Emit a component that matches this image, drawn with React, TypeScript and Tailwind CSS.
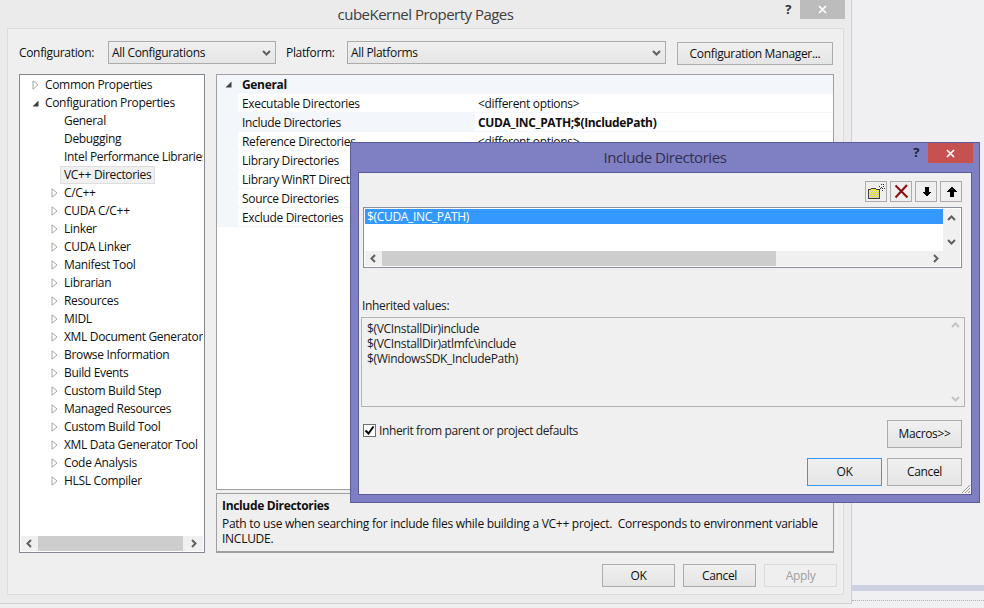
import React from "react";

const font = { fontFamily: '"Open Sans", "Noto Sans", sans-serif' };

const Chev = ({ dir, className = "" }: { dir: "l" | "r" | "u" | "d"; className?: string }) => {
  const d = { l: "M6 1 L2.5 4.5 L6 8", r: "M3 1 L6.5 4.5 L3 8", u: "M1 6 L4.5 2.5 L8 6", d: "M1 3 L4.5 6.5 L8 3" }[dir];
  return (
    <svg width="9" height="9" viewBox="0 0 9 9" className={className}>
      <path d={d} fill="none" stroke="#606060" strokeWidth="2" />
    </svg>
  );
};

const Tri = ({ open }: { open?: boolean }) =>
  open ? (
    <svg width="7" height="7" viewBox="0 0 7 7"><path d="M6.5 0.5 V6.5 H0.5 Z" fill="#404040" /></svg>
  ) : (
    <svg width="7" height="10" viewBox="0 0 7 10"><path d="M1 0.8 L6 5 L1 9.2 Z" fill="#fff" stroke="#a6a6a6" /></svg>
  );

const Btn = ({ children, className = "", disabled }: { children: React.ReactNode; className?: string; disabled?: boolean }) => (
  <div className={`flex items-center justify-center border text-xs ${disabled ? "border-[#d9d9d9] text-[#a0a0a0] bg-[#efefef]" : "border-[#acacac] text-[#101010] bg-gradient-to-b from-[#f0f0f0] to-[#e5e5e5]"} ${className}`}>
    {children}
  </div>
);

const Combo = ({ text, className = "" }: { text: string; className?: string }) => (
  <div className={`flex h-[23px] items-center justify-between border border-[#acacac] bg-gradient-to-b from-[#f0f0f0] to-[#e5e5e5] pl-[3px] pr-[4px] text-xs text-[#101010] ${className}`}>
    <span className="pt-[2px]">{text}</span>
    <Chev dir="d" />
  </div>
);

const tree: [string, number][] = [
  ["Common Properties", 0],
  ["Configuration Properties", 1],
  ["General", 2],
  ["Debugging", 2],
  ["Intel Performance Libraries", 2],
  ["VC++ Directories", 3],
  ["C/C++", 4],
  ["CUDA C/C++", 4],
  ["Linker", 4],
  ["CUDA Linker", 4],
  ["Manifest Tool", 4],
  ["Librarian", 4],
  ["Resources", 4],
  ["MIDL", 4],
  ["XML Document Generator", 4],
  ["Browse Information", 4],
  ["Build Events", 4],
  ["Custom Build Step", 4],
  ["Managed Resources", 4],
  ["Custom Build Tool", 4],
  ["XML Data Generator Tool", 4],
  ["Code Analysis", 4],
  ["HLSL Compiler", 4],
];

const TreeRow = ({ label, kind }: { label: string; kind: number }) => {
  if (kind <= 1) {
    return (
      <div className="flex h-[18px] items-center whitespace-nowrap">
        <div className="flex w-[24px] items-center pl-[11px]"><Tri open={kind === 1} /></div>
        <span>{label}</span>
      </div>
    );
  }
  return (
    <div className="flex h-[18px] items-center whitespace-nowrap">
      <div className="flex w-[43px] shrink-0 items-center pl-[30px]">{kind === 4 && <Tri />}</div>
      {kind === 3 ? (
        <span className="-ml-[4px] border border-[#dedede] bg-[#f0f0f0] px-[3px] leading-[16px]">{label}</span>
      ) : (
        <span>{label}</span>
      )}
    </div>
  );
};

const props: [string, string, boolean?][] = [
  ["Executable Directories", "<different options>"],
  ["Include Directories", "CUDA_INC_PATH;$(IncludePath)", true],
  ["Reference Directories", "<different options>"],
  ["Library Directories", ""],
  ["Library WinRT Directories", ""],
  ["Source Directories", ""],
  ["Exclude Directories", ""],
];

const NewFolder = () => (
  <svg width="18" height="16" viewBox="0 0 18 16" shapeRendering="crispEdges">
    <path d="M1.5 5.5 H3.5 L4.5 4.5 H8.5 L9.5 5.5 H12.5 V14.5 H1.5 Z" fill="#f2ee3c" stroke="#404040" />
    <path d="M3 7h1v1H3zM5 7h1v1H5zM7 7h1v1H7zM9 7h1v1H9zM11 7h1v1h-1zM4 8h1v1H4zM6 8h1v1H6zM8 8h1v1H8zM10 8h1v1h-1zM3 9h1v1H3zM5 9h1v1H5zM7 9h1v1H7zM9 9h1v1H9zM11 9h1v1h-1zM4 10h1v1H4zM6 10h1v1H6zM8 10h1v1H8zM10 10h1v1h-1zM3 11h1v1H3zM5 11h1v1H5zM7 11h1v1H7zM9 11h1v1H9zM11 11h1v1h-1zM4 12h1v1H4zM6 12h1v1H6zM8 12h1v1H8zM10 12h1v1h-1zM3 13h1v1H3zM5 13h1v1H5zM7 13h1v1H7zM9 13h1v1H9zM11 13h1v1h-1z" fill="#c8c8b0" />
    <path d="M14 0h1v1h-1zM12 2h1v1h-1zM16 2h1v1h-1zM14 3h1v1h-1zM13 4h1v1h-1zM15 4h1v1h-1zM17 4h1v1h-1zM12 5h1v1h-1zM15 6h1v1h-1zM16 0h1v1h-1z" fill="#303030" />
  </svg>
);

const RedX = () => (
  <svg width="15" height="15" viewBox="0 0 15 15">
    <path d="M1.5 1.5 L13.5 13.5 M13 1 L1.5 13.5" stroke="#8a0f14" strokeWidth="2" fill="none" />
  </svg>
);

const ArrowIcon = ({ up }: { up?: boolean }) => (
  <svg width="11" height="11" viewBox="0 0 11 11" shapeRendering="crispEdges">
    <path d={up ? "M5.5 0.5 L10.5 5.5 H7.5 V10.5 H3.5 V5.5 H0.5 Z" : "M3.5 0.5 H7.5 V5.5 H10.5 L5.5 10.5 L0.5 5.5 H3.5 Z"} fill="#000" />
  </svg>
);

const ToolBtn = ({ children }: { children: React.ReactNode }) => (
  <div className="flex h-[21px] w-[22px] items-center justify-center border border-[#acacac] bg-[#efefef]">{children}</div>
);

const Dialog = () => (
  <div className="absolute left-[350px] top-[142px] flex h-[361px] w-[630px] flex-col border border-[#5b5b9c] bg-[#7f7fc3]">
    <div className="relative flex h-[29px] shrink-0 items-center justify-center text-[15px] tracking-[-0.45px] text-[#303050]">
      Include Directories
      <span className="absolute right-[60px] top-0 text-[13px] font-bold text-[#202030]">?</span>
      <div className="absolute right-[6px] top-0 flex h-[20px] w-[45px] items-center justify-center bg-[#c75050]">
        <svg width="9" height="9" viewBox="0 0 9 9"><path d="M1 1 L8 8 M8 1 L1 8" stroke="#fff" strokeWidth="1.7" /></svg>
      </div>
    </div>
    <div className="relative mx-[7px] flex h-[323px] flex-col border border-[#5b5b9c] bg-[#f0f0f0]">
      <div className="flex justify-end gap-[3px] pr-[9px] pt-[8px]">
        <ToolBtn><NewFolder /></ToolBtn>
        <ToolBtn><RedX /></ToolBtn>
        <ToolBtn><ArrowIcon /></ToolBtn>
        <ToolBtn><ArrowIcon up /></ToolBtn>
      </div>
      <div className="ml-[4px] mr-[9px] mt-[5px] flex h-[61px] flex-col border border-[#8a8f9c] bg-white p-px">
        <div className="flex min-h-0 flex-1">
          <div className="flex-1">
            <div className="flex h-[15px] items-center bg-[#3399ff] pl-[2px] text-xs text-white">$(CUDA_INC_PATH)</div>
          </div>
          <div className="flex w-[17px] flex-col items-center justify-between bg-[#f0f0f0] py-[5px]">
            <Chev dir="u" />
            <Chev dir="d" />
          </div>
        </div>
        <div className="flex h-[15px] items-center bg-[#f0f0f0]">
          <div className="flex w-[17px] justify-center"><Chev dir="l" /></div>
          <div className="h-full w-[394px] bg-[#cdcdcd]" />
          <div className="flex flex-1 justify-end pr-[20px]"><Chev dir="r" /></div>
        </div>
      </div>
      <div className="ml-[3px] mt-[29px] h-[18px] text-xs leading-[18px] text-[#202020]">Inherited values:</div>
      <div className="ml-[2px] mr-[6px] mt-[2px] flex h-[90px] border border-[#b4b4b4] bg-[#f0f0f0]">
        <div className="flex-1 pl-[5px] pt-[3px] text-xs leading-[15px] text-[#202020]">
          <div>$(VCInstallDir)include</div>
          <div>$(VCInstallDir)atlmfc\include</div>
          <div>$(WindowsSDK_IncludePath)</div>
        </div>
        <div className="flex w-[17px] flex-col items-center justify-between py-[3px] opacity-30">
          <Chev dir="u" />
          <Chev dir="d" />
        </div>
      </div>
      <div className="flex pr-[9px] pt-[13px]">
        <div className="flex h-[14px] items-center pl-[4px] pt-[7px] text-xs tracking-[-0.38px] text-[#202020]">
          <div className="mr-[3px] flex h-[13px] w-[13px] items-center justify-center border border-[#707070] bg-white">
            <svg width="11" height="11" viewBox="0 0 11 11"><path d="M1.5 5.5 L4.5 8.5 L9.5 1.5" fill="none" stroke="#000" strokeWidth="2" /></svg>
          </div>
          <span>Inherit from parent or project defaults</span>
        </div>
        <Btn className="ml-auto h-[28px] w-[75px]">Macros&gt;&gt;</Btn>
      </div>
      <div className="flex justify-end gap-[5px] pr-[9px] pt-[10px]">
        <div className="flex h-[28px] w-[75px] items-center justify-center border border-[#3399ff] bg-gradient-to-b from-[#f0f0f0] to-[#e5e5e5] text-xs text-[#101010]">OK</div>
        <Btn className="h-[28px] w-[75px]">Cancel</Btn>
      </div>
      <svg width="12" height="12" viewBox="0 0 12 12" className="absolute bottom-0 right-0">
        <path d="M11 3 L3 11 M11 6 L6 11 M11 9 L9 11" stroke="#9a9a9a" fill="none" />
      </svg>
    </div>
  </div>
);

export default function App() {
  return (
    <div style={font} className="relative h-[608px] w-[984px] overflow-hidden bg-[#f0f0f2] tracking-[-0.33px]">
      <div className="absolute left-[852px] top-[585px] h-[6px] w-[132px] bg-[#ccd0e0]" />
      <div className="absolute left-[852px] top-[600px] h-px w-[132px] border-t border-dotted border-[#b0b0b0]" />
      <div className="flex h-[604px] w-[852px] flex-col border-b border-r border-[#d0d0d0] bg-[#ebebeb]">
        <div className="relative flex h-[28px] shrink-0 items-center justify-center text-[15px] tracking-[-0.52px] text-[#404040]">
          cubeKernel Property Pages
          <span className="absolute right-[60px] top-0 text-[13px] font-bold text-[#303030]">?</span>
          <div className="absolute right-[6px] top-0 flex h-[19px] w-[45px] items-center justify-center bg-[#bcbcbc]">
            <svg width="9" height="9" viewBox="0 0 9 9"><path d="M1 1 L8 8 M8 1 L1 8" stroke="#fff" strokeWidth="1.7" /></svg>
          </div>
        </div>
        <div className="mx-[7px] flex h-[567px] flex-col border border-[#dcdcdc] bg-[#efefef] pl-[11px] pr-[9px]">
          <div className="flex h-[45px] shrink-0 items-center pt-px text-xs text-[#101010]">
            <span className="w-[89px] pt-[2px]">Configuration:</span>
            <Combo text="All Configurations" className="w-[168px]" />
            <span className="ml-[10px] w-[61px] pt-[2px]">Platform:</span>
            <Combo text="All Platforms" className="w-[319px]" />
            <Btn className="ml-[11px] mt-[2px] h-[23px] w-[156px] pt-[2px]">Configuration Manager...</Btn>
          </div>
          <div className="flex gap-[11px]">
            <div className="flex h-[479px] w-[186px] shrink-0 flex-col border border-[#828790] bg-white p-px text-xs text-[#101010]">
              <div className="min-h-0 flex-1 overflow-hidden">
                {tree.map(([l, k]) => <TreeRow key={l} label={l} kind={k} />)}
              </div>
              <div className="flex h-[15px] items-center bg-[#f0f0f0]">
                <div className="flex w-[17px] justify-center"><Chev dir="l" /></div>
                <div className="h-full w-[145px] bg-[#cdcdcd]" />
                <div className="flex flex-1 justify-center"><Chev dir="r" /></div>
              </div>
            </div>
            <div className="flex w-[618px] flex-col text-xs text-[#101010]">
              <div className="h-[416px] border border-[#a0a0a0] bg-white">
                <div className="flex h-[19px] items-center bg-[#f3f6fa] font-bold">
                  <div className="w-[25px] pl-[8px]"><Tri open /></div>
                  <span>General</span>
                </div>
                {props.map(([n, v, sel]) => (
                  <div key={n} className="flex h-[19px] border-b border-[#f3f6fa]">
                    <div className={`flex w-[258px] items-center pl-[25px] pt-[2px] ${sel ? "bg-[#f3f6fa]" : "bg-gradient-to-r from-[#f3f6fa] from-[21px] to-white to-[21px]"}`}>{n}</div>
                    <div className={`flex flex-1 items-center pl-[3px] pt-[2px] ${sel ? "font-bold" : ""}`}>{v}</div>
                  </div>
                ))}
              </div>
              <div className="mt-[3px] h-[60px] border border-b-2 border-[#a0a0a0] bg-[#efefef] px-[5px] pt-[3px]">
                <div className="font-bold leading-[17px]">Include Directories</div>
                <div className="mt-[2px] leading-[15px] tracking-[-0.27px]">Path to use when searching for include files while building a VC++ project.&nbsp; Corresponds to environment variable INCLUDE.</div>
              </div>
            </div>
          </div>
          <div className="-mr-[3px] flex justify-end gap-[8px] pt-[11px]">
            <Btn className="h-[23px] w-[73px]">OK</Btn>
            <Btn className="h-[23px] w-[73px]">Cancel</Btn>
            <Btn disabled className="h-[23px] w-[73px]">Apply</Btn>
          </div>
        </div>
      </div>
      <Dialog />
    </div>
  );
}
